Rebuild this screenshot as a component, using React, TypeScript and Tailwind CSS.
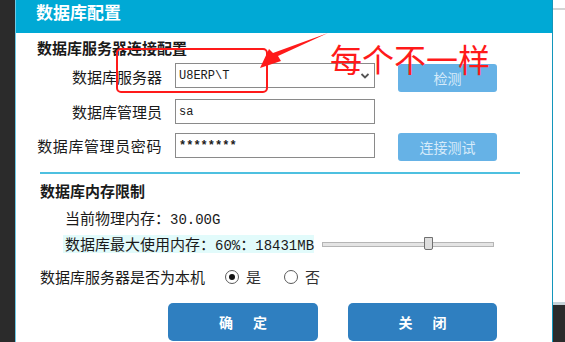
import React from "react";

const cjk = { fontFamily: '"Noto Sans CJK SC", "Noto Sans", sans-serif' };
const mono = { fontFamily: '"Liberation Mono", "DejaVu Sans Mono", monospace' };

function Radio({ checked }: { checked: boolean }) {
  return (
    <span className="w-[14px] h-[14px] rounded-full border border-[#5a5a5a] bg-white flex items-center justify-center">
      {checked && <span className="w-[6px] h-[6px] rounded-full bg-[#111]" />}
    </span>
  );
}

export default function App() {
  return (
    <div className="relative w-[565px] h-[342px] overflow-hidden flex bg-white" style={cjk}>
      <div className="w-[15px] h-full bg-[#2b2b2b]" />
      <div className="w-[538px] h-full border-l border-l-[#6cc9e6] border-r border-r-[#1296bb] flex flex-col bg-white">
        <div className="h-[33px] bg-[#00a9d5] pl-[20px]">
          <div className="h-[24px] leading-[24px] text-[17px] font-bold text-white">数据库配置</div>
        </div>
        <div className="flex flex-col text-[15px] text-[#1a1a1a]">
          <div className="mt-[5px] h-[20px] leading-[20px] ml-[21px] font-bold">数据库服务器连接配置</div>
          <div className="mt-[5px] flex items-start h-[29px]">
            <div className="w-[146px] text-right h-[25px] leading-[27px]">数据库服务器</div>
            <div className="ml-[13px] w-[200px] h-[25px] border border-[#8a8a8a] flex items-center pl-[3px] pr-[4px] text-[12px]" style={mono}>
              <span className="flex-1">U8ERP\T</span>
              <svg width="10" height="8" viewBox="0 0 10 8"><path d="M1.5 2 L5 5.5 L8.5 2" stroke="#555" strokeWidth="1.8" fill="none" /></svg>
            </div>
            <div className="ml-[23px] mt-[1px] w-[99px] h-[28px] rounded-[3px] bg-[#66b2e6] text-[#d6ebfa] text-[14px] flex items-center justify-center">检测</div>
          </div>
          <div className="mt-[7px] flex items-start h-[25px]">
            <div className="w-[146px] text-right h-[25px] leading-[25px]">数据库管理员</div>
            <div className="ml-[13px] w-[200px] h-[25px] border border-[#8a8a8a] flex items-center pl-[3px] text-[12px]" style={mono}>sa</div>
          </div>
          <div className="mt-[9px] flex items-start h-[28px]">
            <div className="w-[146px] text-right h-[25px] leading-[25px] tracking-[0.6px] whitespace-nowrap">数据库管理员密码</div>
            <div className="ml-[13px] w-[200px] h-[25px] border border-[#8a8a8a] flex items-center pl-[3px] text-[12px] font-bold" style={mono}>********</div>
            <div className="ml-[23px] w-[99px] h-[28px] rounded-[3px] bg-[#66b2e6] text-[#d6ebfa] text-[14px] flex items-center justify-center">连接测试</div>
          </div>
          <div className="mt-[11px] ml-[24px] w-[480px] h-[2px] bg-[#4ec0e0]" />
          <div className="mt-[7px] h-[20px] leading-[20px] ml-[24px] font-bold">数据库内存限制</div>
          <div className="mt-[7px] h-[20px] leading-[20px] ml-[49px] whitespace-nowrap">
            当前物理内存：<span className="text-[14px]" style={mono}>30.00G</span>
          </div>
          <div className="mt-[7px] flex items-center h-[18px]">
            <div className="ml-[47px] w-[251px] h-[18px] leading-[18px] bg-[#e2fbfb] pl-[2px] whitespace-nowrap">
              数据库最大使用内存：<span className="text-[14px]" style={mono}>60%</span>：<span className="text-[14px]" style={mono}>18431MB</span>
            </div>
            <div className="relative ml-[8px] w-[172px] h-[5px] bg-[#e4e4e4] border border-[#b5b5b5]">
              <div className="absolute left-[101px] top-[-6px] w-[9px] h-[13px] bg-[#dedede] border border-[#707070] rounded-b-[2px]" />
            </div>
          </div>
          <div className="mt-[14px] h-[20px] flex items-center ml-[24px]">
            <span>数据库服务器是否为本机</span>
            <span className="ml-[20px]"><Radio checked={true} /></span>
            <span className="ml-[7px] text-[#333]">是</span>
            <span className="ml-[23px]"><Radio checked={false} /></span>
            <span className="ml-[7px] text-[#333]">否</span>
          </div>
          <div className="mt-[16px] flex">
            <div className="ml-[152px] w-[150px] h-[38px] rounded-[5px] bg-[#2f7fc0] text-white font-bold text-[14px] flex items-center justify-center gap-[20px]"><span>确</span><span>定</span></div>
            <div className="ml-[30px] w-[149px] h-[38px] rounded-[5px] bg-[#2f7fc0] text-white font-bold text-[14px] flex items-center justify-center gap-[20px]"><span>关</span><span>闭</span></div>
          </div>
        </div>
      </div>
      <div className="flex-1 h-full flex flex-col">
        <div className="h-[8px] bg-white" />
        <div className="h-[2px] bg-[#d4d4d4]" />
        <div className="flex-1 bg-white" />
        <div className="h-[3px] bg-[#c6d3d8]" />
        <div className="h-[37px] bg-[#2b2b2b]" />
      </div>

      <div className="absolute left-[116px] top-[48px] w-[152px] h-[45px] border-[2.5px] border-[#ff1a1a] rounded-[5px]" />
      <svg className="absolute left-0 top-0" width="565" height="342" viewBox="0 0 565 342">
        <polygon points="328,33 278,56 281,61 260,68 269,49 273,53" fill="#ff1a1a" />
      </svg>
      <div className="absolute left-[330px] top-[38px] text-[32px] leading-[40px] text-[#ff1a1a] whitespace-nowrap">每个不一样</div>
    </div>
  );
}
